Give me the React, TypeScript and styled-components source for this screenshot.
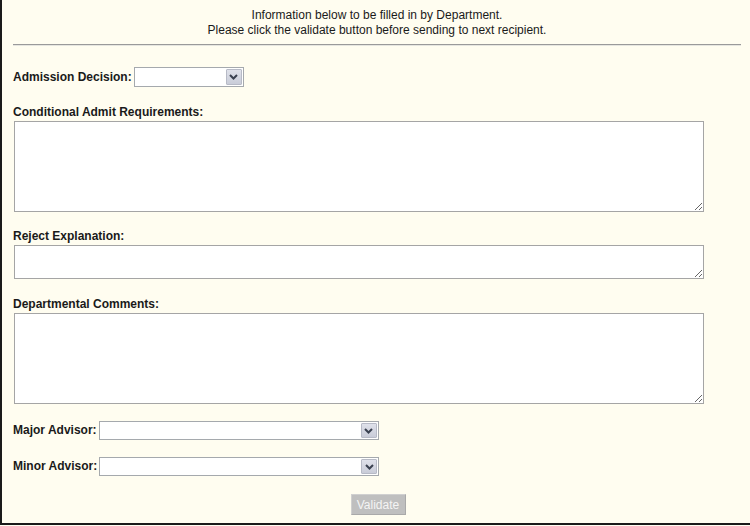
import React, { FC } from 'react';
import styled, { createGlobalStyle } from 'styled-components';

const GlobalStyle = createGlobalStyle`
    html, body {
        margin: 0;
        padding: 0;
        background: #fffdf0;
    }
`;

const Panel = styled.div`
    box-sizing: border-box;
    width: 100%;
    min-height: 525px;
    padding: 8px 9px 8px 11px;
    display: flex;
    flex-direction: column;
    background: #fffdf0;
    border-left: 2px solid #1a1a1a;
    border-bottom: 2px solid #1a1a1a;
    font-family: 'Liberation Sans', Arial, sans-serif;
    font-size: 12px;
    color: #1a1a1a;
`;

const Notice = styled.div`
    text-align: center;
    line-height: 15px;
`;

const Rule = styled.hr`
    margin: 6px 0 0;
    height: 0;
    border: 0;
    border-top: 1px solid #9a9a9a;
    border-bottom: 1px solid #e6e6e0;
`;

const Row = styled.div<{ $top: number }>`
    display: flex;
    align-items: center;
    gap: 2px;
    margin-top: ${({ $top }) => $top}px;
`;

const Label = styled.label<{ $top?: number }>`
    display: block;
    font-weight: bold;
    line-height: 15px;
    margin-top: ${({ $top }) => $top ?? 0}px;
`;

const SelectFrame = styled.div<{ $width: number; $height: number }>`
    box-sizing: border-box;
    display: flex;
    align-items: stretch;
    width: ${({ $width }) => $width}px;
    height: ${({ $height }) => $height}px;
    padding: 1px;
    background: #ffffff;
    border: 1px solid #a5a9ad;
`;

const NativeSelect = styled.select`
    flex: 1;
    min-width: 0;
    appearance: none;
    border: 0;
    outline: none;
    background: transparent;
    font: inherit;
`;

const ArrowBox = styled.span`
    box-sizing: border-box;
    width: 16px;
    display: flex;
    align-items: center;
    justify-content: center;
    background: linear-gradient(#dfe1ea, #c9ccd8);
    border: 1px solid #b7bac6;
    border-radius: 1px;
`;

const Area = styled.textarea<{ $height: number }>`
    box-sizing: border-box;
    display: block;
    width: 690px;
    height: ${({ $height }) => $height}px;
    margin: 1px 0 0 1px;
    border: 1px solid #a5a5a5;
    background: #ffffff;
    font: inherit;
`;

const Actions = styled.div`
    display: flex;
    justify-content: center;
    margin-top: 18px;
`;

const ValidateButton = styled.button`
    box-sizing: border-box;
    width: 55px;
    height: 21px;
    padding: 0;
    background: #bfbfbf;
    border: 1px solid #a9a9a9;
    border-top-color: #d0d0d0;
    border-left-color: #d0d0d0;
    color: #f4f4f4;
    font-family: 'Liberation Sans', Arial, sans-serif;
    font-size: 12px;
    margin-left: 2px;
`;

const Chevron: FC = () => (
    <svg width="9" height="6" viewBox="0 0 9 6">
        <path d="M1 1 L4.5 4.5 L8 1" fill="none" stroke="#3a4150" strokeWidth="2" />
    </svg>
);

const Dropdown: FC<{ width: number; height: number; id: string }> = ({ width, height, id }) => (
    <SelectFrame $width={width} $height={height}>
        <NativeSelect id={id}>
            <option value=""></option>
        </NativeSelect>
        <ArrowBox>
            <Chevron />
        </ArrowBox>
    </SelectFrame>
);

const App: FC = () => (
    <>
        <GlobalStyle />
        <Panel>
            <Notice>
                Information below to be filled in by Department.
                <br />
                Please click the validate button before sending to next recipient.
            </Notice>
            <Rule />

            <Row $top={21}>
                <Label htmlFor="decision">Admission Decision:</Label>
                <Dropdown id="decision" width={110} height={20} />
            </Row>

            <Label $top={18}>Conditional Admit Requirements:</Label>
            <Area $height={91} />

            <Label $top={17}>Reject Explanation:</Label>
            <Area $height={34} />

            <Label $top={18}>Departmental Comments:</Label>
            <Area $height={91} />

            <Row $top={17}>
                <Label htmlFor="major">Major Advisor:</Label>
                <Dropdown id="major" width={280} height={19} />
            </Row>

            <Row $top={17}>
                <Label htmlFor="minor">Minor Advisor:</Label>
                <Dropdown id="minor" width={280} height={19} />
            </Row>

            <Actions>
                <ValidateButton disabled>Validate</ValidateButton>
            </Actions>
        </Panel>
    </>
);

export default App;
